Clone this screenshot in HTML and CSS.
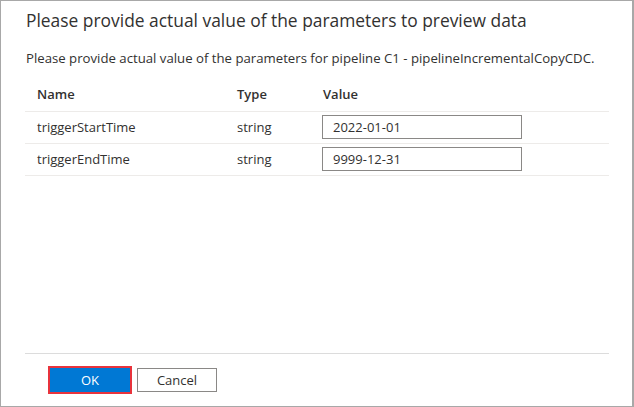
FILE: index.html
```html
<!DOCTYPE html>
<html>
<head>
<meta charset="utf-8">
<link rel="stylesheet" href="styles.css">
</head>
<body>
<div class="dialog">
  <h1 class="title">Please provide actual value of the parameters to preview data</h1>
  <p class="desc">Please provide actual value of the parameters for pipeline C1 - pipelineIncrementalCopyCDC.</p>
  <table class="params">
    <thead>
      <tr><th class="c-name">Name</th><th class="c-type">Type</th><th class="c-value">Value</th></tr>
    </thead>
    <tbody>
      <tr><td class="c-name">triggerStartTime</td><td class="c-type">string</td><td class="c-value"><input class="field" type="text" value="2022-01-01"></td></tr>
      <tr><td class="c-name">triggerEndTime</td><td class="c-type">string</td><td class="c-value"><input class="field" type="text" value="9999-12-31"></td></tr>
    </tbody>
  </table>
  <div class="spacer"></div>
  <div class="footer">
    <button class="btn btn-primary">OK</button>
    <button class="btn btn-default">Cancel</button>
  </div>
</div>
</body>
</html>
```

FILE: styles.css
```css
* { box-sizing: border-box; }
html, body { margin: 0; padding: 0; background: #fff; }
body {
  font-family: "Open Sans", "Noto Sans", "Liberation Sans", sans-serif;
  color: #323130;
}
.dialog {
  width: 634px;
  height: 407px;
  border: 1px solid #a8a8a8;
  border-right-width: 2px;
  display: flex;
  flex-direction: column;
  padding: 0 23px 0 24px;
}
.title {
  margin: 7px 0 0 1px;
  font-size: 17.4px;
  font-weight: 400;
  line-height: 24px;
  color: #323130;
}
.desc {
  margin: 17px 0 0 1px;
  font-size: 13.2px;
  line-height: 18px;
}
.params {
  margin-top: 11px;
  border-collapse: collapse;
  width: 100%;
  font-size: 13px;
}
.params th {
  font-weight: 600;
  text-align: left;
  height: 33px;
  padding: 0 0 1px 12px;
  border-bottom: 1px solid #edebe9;
}
.params td {
  height: 32px;
  padding: 0 0 1px 12px;
  border-bottom: 1px solid #edebe9;
  vertical-align: middle;
}
.c-name { width: 200px; }
.c-type { width: 86px; }
.field {
  width: 200px;
  height: 24px;
  border: 1px solid #8a8886;
  padding: 0 10px;
  margin-left: -1px;
  font-family: inherit;
  font-size: 13px;
  color: #323130;
  display: block;
}
.spacer { flex: 1; }
.footer {
  border-top: 1px solid #dcdcdc;
  padding: 14px 0 14px 25px;
  display: flex;
  gap: 7px;
}
.btn {
  width: 80px;
  height: 24px;
  font-family: inherit;
  font-size: 13px;
  padding: 0;
  border-radius: 0;
}
.btn-primary {
  background: #0078d4;
  color: #fff;
  border: 1px solid #0078d4;
  outline: 2px solid #e8333c;
}
.btn-default {
  background: #fff;
  color: #323130;
  border: 1px solid #8a8886;
}
```
